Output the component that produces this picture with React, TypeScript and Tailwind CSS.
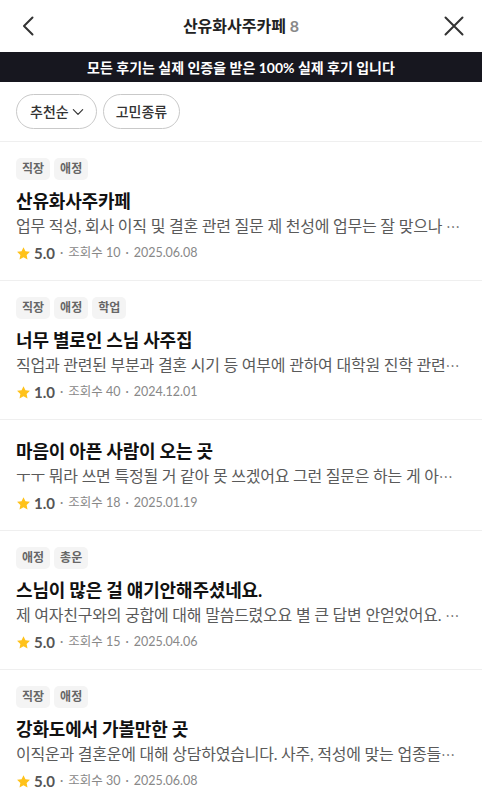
import React from 'react';

interface Review {
  tags: string[];
  title: string;
  body: string;
  rating: string;
  views: number;
  date: string;
}

const reviews: Review[] = [
  {
    tags: ['직장', '애정'],
    title: '산유화사주카페',
    body: '업무 적성, 회사 이직 및 결혼 관련 질문 제 천성에 업무는 잘 맞으나 ',
    rating: '5.0',
    views: 10,
    date: '2025.06.08',
  },
  {
    tags: ['직장', '애정', '학업'],
    title: '너무 별로인 스님 사주집',
    body: '직업과 관련된 부분과 결혼 시기 등 여부에 관하여 대학원 진학 관련',
    rating: '1.0',
    views: 40,
    date: '2024.12.01',
  },
  {
    tags: [],
    title: '마음이 아픈 사람이 오는 곳',
    body: 'ㅜㅜ 뭐라 쓰면 특정될 거 같아 못 쓰겠어요 그런 질문은 하는 게 아',
    rating: '1.0',
    views: 18,
    date: '2025.01.19',
  },
  {
    tags: ['애정', '총운'],
    title: '스님이 많은 걸 얘기안해주셨네요.',
    body: '제 여자친구와의 궁합에 대해 말씀드렸오요 별 큰 답변 안얻었어요. ',
    rating: '5.0',
    views: 15,
    date: '2025.04.06',
  },
  {
    tags: ['직장', '애정'],
    title: '강화도에서 가볼만한 곳',
    body: '이직운과 결혼운에 대해 상담하였습니다. 사주, 적성에 맞는 업종들',
    rating: '5.0',
    views: 30,
    date: '2025.06.08',
  },
];

function Star() {
  return (
    <svg width="15" height="15" viewBox="0 0 24 24" className="shrink-0">
      <path
        d="M12 1.8l3.1 6.6 7.2.9-5.3 5 1.4 7.1L12 17.9l-6.4 3.5 1.4-7.1-5.3-5 7.2-.9z"
        fill="#ffc21a"
      />
    </svg>
  );
}

function ReviewItem({ review }: { review: Review }) {
  const hasTags = review.tags.length > 0;
  return (
    <div className={`px-4 pb-[17px] border-b border-[#efefef] ${hasTags ? 'pt-4' : 'pt-[18px]'}`}>
      {hasTags && (
        <div className="flex gap-1 mb-2">
          {review.tags.map((t) => (
            <span
              key={t}
              className="h-[22px] px-[6px] flex items-center rounded-[5px] bg-[#f4f4f4] text-[12px] font-bold text-[#666]"
            >
              {t}
            </span>
          ))}
        </div>
      )}
      <h3 className="text-[18px] leading-[26px] font-bold text-[#111] tracking-[-0.01em]">
        {review.title}
      </h3>
      <p className="text-[16px] leading-[24px] text-[#5a5a5a] tracking-[-0.015em] whitespace-nowrap">
        {review.body}
        <span className="font-['Noto_Sans_CJK_KR',sans-serif] text-[14px]">…</span>
      </p>
      <div className="mt-[5px] h-[20px] flex items-center text-[12.5px] text-[#888]">
        <Star />
        <span className="ml-[3px] text-[15px] font-bold text-[#555]">{review.rating}</span>
        <span className="mx-[5px]">·</span>
        <span>조회수 {review.views}</span>
        <span className="mx-[5px]">·</span>
        <span>{review.date}</span>
      </div>
    </div>
  );
}

export default function App() {
  return (
    <div className="w-[482px] min-h-screen bg-white font-['Lato','Noto_Sans_CJK_KR',sans-serif]">
      {/* Header */}
      <div className="h-[52px] px-4 grid grid-cols-[48px_1fr_48px] items-center">
        <button className="w-6 h-6 text-[#333]">
          <svg width="24" height="24" viewBox="0 0 24 24" fill="none" stroke="currentColor" strokeWidth="2" strokeLinecap="round" strokeLinejoin="round">
            <path d="M16.5 3.5L8 12l8.5 8.5" />
          </svg>
        </button>
        <h1 className="text-center text-[16px] font-bold text-[#222]">
          산유화사주카페 <span className="text-[#888]">8</span>
        </h1>
        <button className="w-6 h-6 justify-self-end text-[#333]">
          <svg width="24" height="24" viewBox="0 0 24 24" fill="none" stroke="currentColor" strokeWidth="2" strokeLinecap="round">
            <path d="M3.5 3.5l17 17M20.5 3.5l-17 17" />
          </svg>
        </button>
      </div>

      {/* Banner */}
      <div className="h-[30px] bg-[#17171f] flex items-center justify-center text-white text-[14px] font-bold">
        모든 후기는 실제 인증을 받은 100% 실제 후기 입니다
      </div>

      {/* Filters */}
      <div className="px-4 pt-3 pb-[12px] flex gap-1.5 border-b border-[#efefef]">
        <button className="h-[35px] pl-[13px] pr-[11px] flex items-center gap-[2px] rounded-full border border-[#c9c9c9] text-[14px] font-medium text-[#333]">
          추천순
          <svg width="14" height="14" viewBox="0 0 24 24" fill="none" stroke="currentColor" strokeWidth="2" strokeLinecap="round" strokeLinejoin="round">
            <path d="M4 8l8 8 8-8" />
          </svg>
        </button>
        <button className="h-[35px] px-3 flex items-center rounded-full border border-[#c9c9c9] text-[14px] font-medium text-[#333]">
          고민종류
        </button>
      </div>

      {/* List */}
      <div>
        {reviews.map((r, i) => (
          <ReviewItem key={i} review={r} />
        ))}
      </div>
    </div>
  );
}
